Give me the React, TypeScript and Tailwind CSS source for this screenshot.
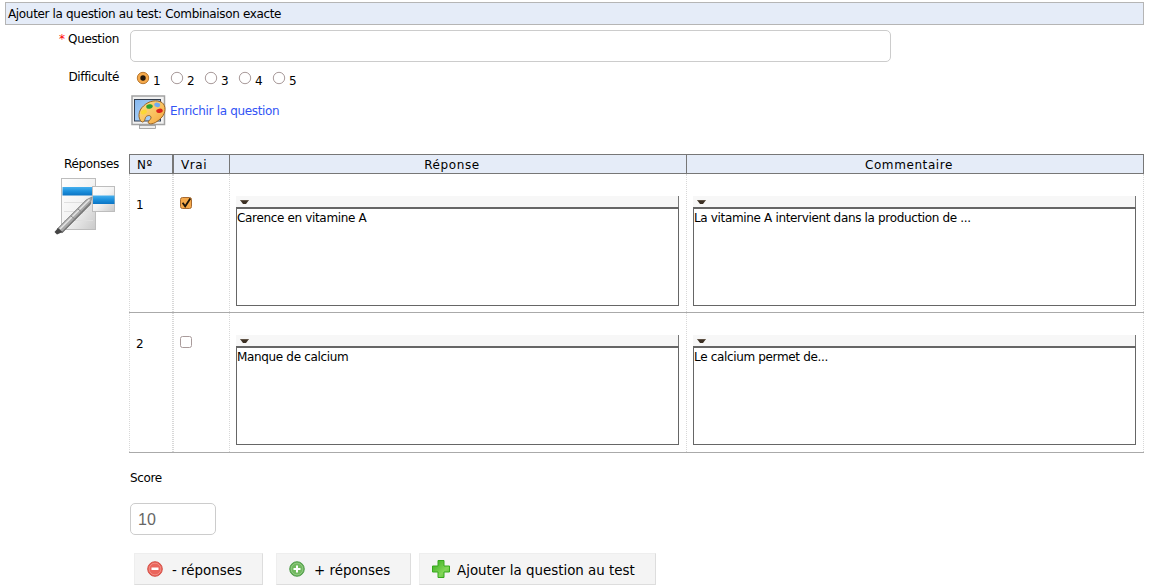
import React from "react";

function PaletteIcon() {
  return (
    <svg width="36" height="36" viewBox="0 0 36 36" className="block">
      <defs>
        <linearGradient id="screen" x1="0" y1="0" x2="1" y2="1">
          <stop offset="0" stopColor="#5b9ae4" />
          <stop offset="1" stopColor="#c5e3fb" />
        </linearGradient>
        <linearGradient id="wood" x1="0" y1="0" x2="1" y2="1">
          <stop offset="0" stopColor="#fbe08a" />
          <stop offset="0.6" stopColor="#f9bf5c" />
          <stop offset="1" stopColor="#f2a13c" />
        </linearGradient>
      </defs>
      <path d="M11 28h13l1 5H10z" fill="#d8d8d8" stroke="#999" strokeWidth="0.8" />
      <rect x="9.500" y="30.500" width="16" height="3" fill="#eee" stroke="#999" strokeWidth="0.8" />
      <rect x="2" y="1" width="32.500" height="28.500" fill="#f1f1f1" stroke="#a2a2a2" strokeWidth="1.500" />
      <rect x="4.500" y="4.500" width="26" height="21.500" fill="url(#screen)" stroke="#333f50" />
      <path d="M5 5h15L9 25H5z" fill="#b9dafa" opacity="0.45" />
      <path
        d="M12 27C7.500 24 8 15.500 13.500 11C19 5.500 27 4.500 32 7.500C36.500 11 35.500 18 32 22C28 26.500 22.500 30 19 28.500C16 27 21.800 24.500 21 22C20 19.500 16.500 20.500 15.500 22.500C15 24.500 14 27.500 12 27Z"
        fill="url(#wood)"
        stroke="#9b6422"
        strokeWidth="1"
      />
      <ellipse cx="13.800" cy="17" rx="3.200" ry="2.200" fill="#fbd735" transform="rotate(-25 13.800 17)" />
      <ellipse cx="19.500" cy="11.500" rx="3.300" ry="2.200" fill="#29a032" transform="rotate(-12 19.500 11.500)" />
      <ellipse cx="27.200" cy="9.800" rx="3" ry="2.200" fill="#6faaf2" transform="rotate(15 27.200 9.800)" />
      <ellipse cx="29.500" cy="15.800" rx="3.300" ry="2.200" fill="#dc231c" transform="rotate(-10 29.500 15.800)" />
    </svg>
  );
}

function AnswersIcon() {
  return (
    <svg width="62" height="58" viewBox="0 0 62 58" className="block">
      <defs>
        <linearGradient id="sheet" x1="0" y1="0" x2="1" y2="1">
          <stop offset="0" stopColor="#ffffff" />
          <stop offset="0.5" stopColor="#f3f3f3" />
          <stop offset="1" stopColor="#c9c9c9" />
        </linearGradient>
        <linearGradient id="band" x1="0" y1="0" x2="0" y2="1">
          <stop offset="0" stopColor="#46b0ee" />
          <stop offset="0.5" stopColor="#1c90dc" />
          <stop offset="1" stopColor="#0b74c4" />
        </linearGradient>
      </defs>
      <rect x="7.500" y="0.500" width="34" height="51" fill="url(#sheet)" stroke="#bdbdbd" />
      <path d="M10 24.500h29M10 33.500h29M10 42.500h29" stroke="#dfdfdf" />
      <rect x="8.500" y="9" width="31" height="8.500" fill="url(#band)" />
      <rect x="38.500" y="8.500" width="22" height="25" fill="url(#sheet)" stroke="#bdbdbd" />
      <rect x="39" y="17.500" width="21.500" height="8.500" fill="url(#band)" />
      <path d="M38 19L32 22L3 51L8 55L36 27Z" fill="#a9a9a9" stroke="#888" strokeWidth="0.8" />
      <path d="M35.500 21.500L6 51" stroke="#e4e4e4" strokeWidth="1.600" />
      <path d="M37 24.500L8 54.500" stroke="#777" strokeWidth="1.200" />
      <path d="M24 31l5 4M17 38l5 4" stroke="#888" />
      <path d="M4 50l4.500 4L3 56.500L0.500 54Z" fill="#444" />
    </svg>
  );
}

function MinusIcon() {
  return (
    <svg width="16" height="16" viewBox="0 0 16 16">
      <circle cx="8" cy="8" r="7.300" fill="#e8544c" stroke="#d4544a" strokeWidth="1" />
      <circle cx="8" cy="8" r="5.900" fill="#ea655c" stroke="#f5a59c" strokeWidth="0.700" />
      <rect x="4.500" y="6.500" width="7" height="2.500" fill="#fff" />
    </svg>
  );
}

function PlusIcon() {
  return (
    <svg width="16" height="16" viewBox="0 0 16 16">
      <circle cx="8" cy="8" r="7.300" fill="#62ae53" stroke="#4b9a46" strokeWidth="0.900" />
      <circle cx="8" cy="8" r="5.900" fill="#71b95f" stroke="#a5d298" strokeWidth="0.700" />
      <path d="M7 4.500h2V7h2.500v2H9v2.500H7V9H4.500V7H7z" fill="#fff" />
    </svg>
  );
}

function CrossIcon() {
  return (
    <svg width="18" height="18" viewBox="0 0 18 18">
      <defs>
        <linearGradient id="leaf" x1="0" y1="0" x2="1" y2="1">
          <stop offset="0" stopColor="#35ad1c" />
          <stop offset="0.65" stopColor="#83d659" />
          <stop offset="1" stopColor="#4dbc2d" />
        </linearGradient>
      </defs>
      <path d="M6 0.500h6v5.500h5.500v6H12v5.500H6V12H0.500V6H6z" fill="url(#leaf)" stroke="#36a81d" />
    </svg>
  );
}

function Radio({ value, checked }: { value: number; checked?: boolean }) {
  return (
    <label className="flex w-[34px] items-start">
      <svg width="14" height="14" viewBox="0 0 14 14" className="mr-[3px]">
        <circle cx="7" cy="7" r="5.700" fill={checked ? "#f5a94a" : "#fff"} stroke={checked ? "#b9782f" : "#a99b9b"} />
        {checked && <circle cx="7" cy="7" r="2.700" fill="#21160c" />}
      </svg>
      <span className="pt-[3px] leading-[14px]">{value}</span>
    </label>
  );
}

function Check({ checked }: { checked?: boolean }) {
  return (
    <svg width="14" height="14" viewBox="0 0 14 14" className="block">
      <rect x="1.500" y="1.500" width="11" height="11" rx="2" fill={checked ? "#f5a94a" : "#fff"} stroke={checked ? "#a66a32" : "#a99b9b"} />
      {checked && <path d="M3.600 6.700L6.200 10.300L11.300 2.500" fill="none" stroke="#1d1409" strokeWidth="1.800" />}
    </svg>
  );
}

function Editor({ text }: { text: string }) {
  return (
    <div className="w-[443px]">
      <div className="h-[11px] border-r border-[#777] bg-[#f7f7f7] pt-[4px] pl-[4px]">
        <svg width="9" height="4" viewBox="0 0 9 4" className="block">
          <path d="M0 0h9L6 4H3z" fill="#3c3024" />
          <path d="M0 0h9" stroke="#978b7c" strokeWidth="0.800" />
        </svg>
      </div>
      <div className="h-[99px] border border-t-2 border-[#666] bg-white leading-[19px]">{text}</div>
    </div>
  );
}

function AnswerRow({ index, checked, answer, comment }: { index: number; checked?: boolean; answer: string; comment: string }) {
  return (
    <div className="grid h-full grid-cols-[44px_57px_457px_457px] border-b border-[#aaa]">
      <div className="border-x border-dotted border-x-[#d8d8d8] pt-[22px] pl-[6px] leading-[19px]">{index}</div>
      <div className="border-r border-l border-dotted border-[#d8d8d8] pt-[22px] pl-[5px]">
        <Check checked={checked} />
      </div>
      <div className="border-r border-dotted border-[#d8d8d8] pt-[22px] pl-[6px]"><Editor text={answer} /></div>
      <div className="border-r border-dotted border-[#d8d8d8] pt-[22px] pl-[6px]"><Editor text={comment} /></div>
    </div>
  );
}

function ActionButton({ icon, label, className }: { icon: React.ReactNode; label: string; className: string }) {
  return (
    <button className={`flex h-[32px] items-center border border-t-[#eee] border-r-[#ddd] border-b-[#ddd] border-l-[#eee] bg-[#f4f4f4] pl-[12px] text-[13.4px] tracking-normal whitespace-nowrap ${className}`}>
      {icon}
      <span className="pt-[4px]">{label}</span>
    </button>
  );
}

export default function App() {
  return (
    <main className="h-[588px] w-[1157px] overflow-hidden bg-white pt-[2px] pl-[5px] font-['DejaVu_Sans',sans-serif] text-[12px] tracking-[-0.34px] text-black">
      <h1 className="h-[23px] w-[1139px] border border-[#b5b5b5] bg-[#e5ecf8] pl-[2px] leading-[23px]">
        Ajouter la question au test: Combinaison exacte
      </h1>

      <div className="flex h-[41px] pt-[5px]">
        <label className="w-[114px] text-right leading-[19px]">
          <span className="text-[#f00]">*</span> Question
        </label>
        <input className="ml-[11px] h-[32px] w-[761px] rounded-[5px] border border-[#ccc]" />
      </div>

      <div className="flex h-[29px] pt-[3px]">
        <div className="w-[114px] text-right leading-[17px]">Difficulté</div>
        <div className="ml-[17px] flex pt-[2px]">
          <Radio value={1} checked />
          <Radio value={2} />
          <Radio value={3} />
          <Radio value={4} />
          <Radio value={5} />
        </div>
      </div>

      <div className="flex h-[59px] pl-[125px]">
        <PaletteIcon />
        <a className="ml-[4px] pt-[7px] leading-[19px] text-[#3355f5]">Enrichir la question</a>
      </div>

      <section className="flex h-[299px]">
        <div className="w-[124px] shrink-0">
          <div className="h-[19px] pr-[10px] text-right leading-[21px]">Réponses</div>
          <div className="pt-[5px] pl-[49px]"><AnswersIcon /></div>
        </div>
        <div className="grid w-[1015px] grid-rows-[20px_139px_140px]">
          <div className="grid grid-cols-[44px_57px_457px_457px] grid-rows-[18px] border-y border-[#777] bg-[#e5ecf8] leading-[21px] tracking-[0.6px]">
            <div className="border-x border-[#777] pl-[7px]">Nº</div>
            <div className="border-r border-l border-[#777] pl-[7px]">Vrai</div>
            <div className="border-r border-[#777] pr-[12px] text-center">Réponse</div>
            <div className="border-r border-[#777] pr-[12px] text-center">Commentaire</div>
          </div>
          <AnswerRow index={1} checked answer="Carence en vitamine A" comment="La vitamine A intervient dans la production de ..." />
          <AnswerRow index={2} answer="Manque de calcium" comment="Le calcium permet de..." />
        </div>
      </section>

      <div className="flex flex-col pt-[16px] pl-[125px]">
        <label className="h-[17px] leading-[19px]">Score</label>
        <input
          defaultValue="10"
          className="mt-[17px] h-[32px] w-[86px] rounded-[5px] border border-[#ccc] pt-[2px] pl-[7px] font-['Liberation_Sans',sans-serif] text-[16px] tracking-normal text-[#666]"
        />
      </div>

      <div className="flex pt-[18px] pl-[129px]">
        <ActionButton className="w-[129px] gap-[9px]" icon={<MinusIcon />} label="- réponses" />
        <ActionButton className="ml-[13px] w-[135px] gap-[9px]" icon={<PlusIcon />} label="+ réponses" />
        <ActionButton className="ml-[8px] w-[237px] gap-[7px]" icon={<CrossIcon />} label="Ajouter la question au test" />
      </div>
    </main>
  );
}
